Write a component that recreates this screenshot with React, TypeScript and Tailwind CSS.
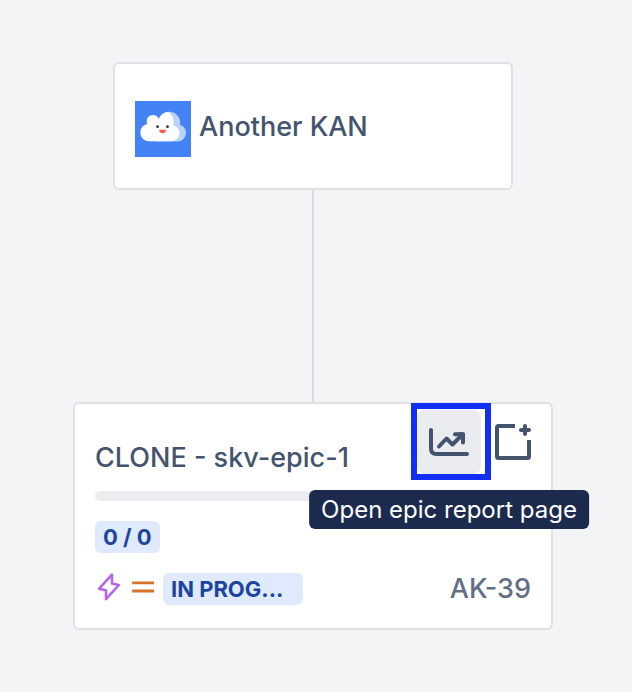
import React from 'react';

const CloudAvatar: React.FC = () => (
  <svg className="size-14 shrink-0" viewBox="0 0 56 56" aria-hidden="true">
    <rect width="56" height="56" fill="#4482f8" />
    <g fill="#b9d3fb">
      <circle cx="34" cy="22" r="11.2" />
      <circle cx="42.4" cy="31.8" r="8.6" />
      <rect x="20" y="32" width="22" height="8.4" />
    </g>
    <g fill="#ffffff">
      <circle cx="14" cy="31.5" r="8.7" />
      <circle cx="18" cy="20.3" r="6.3" />
      <path d="M24 18.5C26 13.5 29.5 11.2 33.5 11c3.3 2.2 5.2 6.4 5.2 10.6 0 1.3-.1 2.2-.3 3 3.7.8 6 3.6 6 7.2 0 4.7-3.3 8.4-8.4 8.4H14V20z" />
    </g>
    <circle cx="22.6" cy="25.7" r="1.4" fill="#303440" />
    <circle cx="32.5" cy="25.7" r="1.4" fill="#303440" />
    <path d="M24.2 28.8h6.8c0 2-1.4 3.4-3.4 3.4s-3.4-1.4-3.4-3.4z" fill="#f15b50" />
  </svg>
);

const ReportIcon: React.FC = () => (
  <svg className="size-16" viewBox="0 0 64 64" fill="none" stroke="currentColor" strokeWidth="4" strokeLinecap="round" strokeLinejoin="round" aria-hidden="true">
    <path d="M14 20v18.5q0 5.5 5.5 5.5H50" />
    <path d="M22 36.5l7.5-8 6 6L45 25" />
    <path d="M38 24.2h8v8.3" />
    <path d="M42 24.2h4v4z" fill="currentColor" />
  </svg>
);

const AddChildIcon: React.FC = () => (
  <svg className="size-16" viewBox="0 0 64 64" fill="none" stroke="currentColor" strokeWidth="4" strokeLinejoin="round" aria-hidden="true">
    <path d="M34 16H17.5Q16 16 16 17.5v29Q16 48 17.5 48h29q1.5 0 1.5-1.5V30" />
    <path d="M44 16v8M40 20h8" strokeLinecap="round" />
    <path d="M44 16l4 4-4 4-4-4z" fill="currentColor" stroke="none" />
  </svg>
);

const EpicIcon: React.FC = () => (
  <svg className="size-7" viewBox="0 0 28 28" fill="none" stroke="#b463ef" strokeWidth="2.5" strokeLinejoin="round" aria-label="Epic">
    <path d="M17 1.6v9l6.9 1.4L11 26.2v-9L4.1 15.7z" />
  </svg>
);

const MediumPriorityIcon: React.FC = () => (
  <svg className="size-7" viewBox="0 0 28 28" fill="none" stroke="#d97128" strokeWidth="2.8" aria-label="Medium priority">
    <path d="M3.2 9.8h21.8M3.2 18h21.8" />
  </svg>
);

const ProjectCard: React.FC = () => (
  <div className="flex w-full max-w-[400px] items-center gap-2 rounded-md border-2 border-[#dfe1e6] bg-white px-5 pt-[37px] pb-[31px]">
    <CloudAvatar />
    <span className="mb-1">Another KAN</span>
  </div>
);

const EpicCard: React.FC = () => (
  <div className="w-full max-w-[480px] rounded-md border-2 border-[#dfe1e6] bg-white pt-1.5 pb-[23px]">
    <div className="flex items-end justify-between pr-1.5 pl-5">
      <span>CLONE - skv-epic-1</span>
      <div className="flex">
        <div className="relative">
          <button type="button" aria-describedby="report-tip" aria-label="Epic report" className="block rounded-lg bg-[#ebecf0]">
            <ReportIcon />
          </button>
          {/* Highlight around the active action */}
          <div className="pointer-events-none absolute -top-[7px] -right-2.5 -bottom-1.5 -left-1.5 border-6 border-[#1230f5]" />
          <div
            id="report-tip"
            role="tooltip"
            className="absolute top-20 left-1/2 z-10 -translate-x-1/2 rounded-md bg-[#1c2b4d] px-3 py-1 text-2xl leading-[31px] font-normal whitespace-nowrap text-white"
          >
            Open epic report page
          </div>
        </div>
        <button type="button" aria-label="Add child issue" className="block rounded-lg">
          <AddChildIcon />
        </button>
      </div>
    </div>

    <div className="mt-[17px] flex flex-col gap-5 px-5">
      <div className="h-2.5 rounded-full bg-[#ebecf0]" />
      <div className="flex">
        <span className="rounded-md bg-[#dfeafe] px-2 text-[22px] leading-8 font-bold text-[#1d459f]">0 / 0</span>
      </div>
      <div className="flex items-start justify-between">
        <div className="flex gap-1.5">
          <EpicIcon />
          <MediumPriorityIcon />
          <span className="w-[140px] rounded-md bg-[#dfeafe] px-2 text-[22px] leading-8 font-bold text-[#1d459f]">IN PROG...</span>
        </div>
        <span className="text-[#626f86]">AK-39</span>
      </div>
    </div>
  </div>
);

const App: React.FC = () => {
  return (
    <main className="flex min-h-screen flex-col items-center bg-[#f3f4f6] pt-[62px] pr-1.5 pb-[62px] font-['Inter',sans-serif] text-[27px] leading-8 font-medium text-[#44546f]">
      <ProjectCard />
      <div className="h-[212px] w-0.5 bg-[#d8dae0]" />
      <EpicCard />
    </main>
  );
};

export default App;
